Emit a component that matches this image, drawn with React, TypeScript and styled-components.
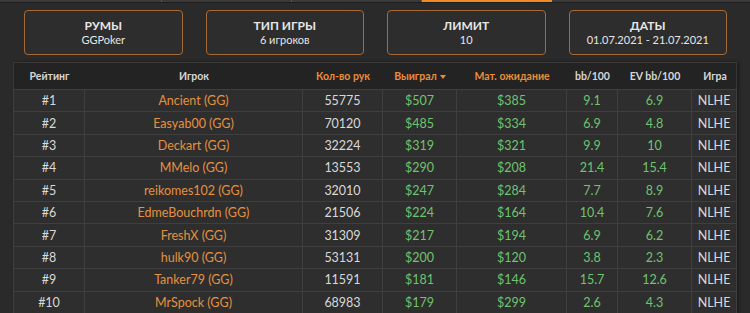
import React from 'react';
import styled, { createGlobalStyle } from 'styled-components';

const GlobalStyle = createGlobalStyle`
  html, body {
    margin: 0;
    padding: 0;
    background: #2a2a2a;
    font-family: Lato, "Open Sans", sans-serif;
    overflow: hidden;
  }
`;

const Page = styled.div`
  width: 750px;
  height: 313px;
  background: #2a2a2a;
  display: flex;
  flex-direction: column;
`;

const TabBar = styled.div`
  display: flex;
  height: 2px;
  padding-left: 32px;
  background: #3a3a3a;
  border-bottom: 1px solid #1f1f1f;
`;

const Tab = styled.div<{ $active?: boolean }>`
  width: 130px;
  height: 2px;
  background: ${(p) => (p.$active ? '#f08a24' : 'transparent')};
  border-right: ${(p) => (p.$active ? 'none' : '1px solid #555')};
  box-sizing: border-box;
`;

const Filters = styled.div`
  display: flex;
  gap: 23px;
  padding: 7px 23px 0 24px;
`;

const FilterCard = styled.div`
  flex: 1;
  height: 45px;
  box-sizing: border-box;
  border: 1px solid #a76a35;
  border-radius: 4px;
  background: #2d2d2d;
  display: flex;
  flex-direction: column;
  align-items: center;
  justify-content: center;
  color: #e6e6e6;
`;

const FilterTitle = styled.div`
  font-weight: 700;
  font-size: 12px;
  line-height: 14px;
`;

const FilterValue = styled.div`
  font-size: 11px;
  line-height: 14px;
`;

const Table = styled.div`
  margin: 7px 13px 0 13px;
  background: #2e2e2e;
  box-shadow: 2px 0 3px rgba(0, 0, 0, 0.35);
`;

const cols = '71px 218px 80px 74px 110px 51px 74px 46px';

const HeadRow = styled.div`
  display: grid;
  grid-template-columns: ${cols};
  height: 27px;
  background: #232323;
  border: 1px solid #383838;
  border-bottom: none;
  box-sizing: border-box;
`;

const HeadCell = styled.div<{ $accent?: boolean }>`
  display: flex;
  align-items: center;
  justify-content: center;
  gap: 3px;
  font-size: 10.5px;
  font-weight: 700;
  color: ${(p) => (p.$accent ? '#e88e3a' : '#d6d6d6')};
`;

const Caret = styled.span`
  width: 0;
  height: 0;
  border-left: 3.5px solid transparent;
  border-right: 3.5px solid transparent;
  border-top: 4px solid #e88e3a;
  margin-top: 1px;
`;

const Row = styled.div`
  display: grid;
  grid-template-columns: ${cols};
  height: 22.4px;
  box-sizing: border-box;
  border-top: 1px solid #3f3f3f;
`;

const Cell = styled.div<{ $tone?: 'name' | 'money' | 'plain' }>`
  display: flex;
  align-items: center;
  justify-content: center;
  font-size: 12.5px;
  border-left: 1px solid #3f3f3f;
  color: ${(p) =>
    p.$tone === 'name' ? '#e5913f' : p.$tone === 'money' ? '#6fc46f' : '#d9d9d9'};
  &:last-child {
    border-right: 1px solid #3f3f3f;
  }
`;

const rows = [
  ['#1', 'Ancient (GG)', '55775', '$507', '$385', '9.1', '6.9'],
  ['#2', 'Easyab00 (GG)', '70120', '$485', '$334', '6.9', '4.8'],
  ['#3', 'Deckart (GG)', '32224', '$319', '$321', '9.9', '10'],
  ['#4', 'MMelo (GG)', '13553', '$290', '$208', '21.4', '15.4'],
  ['#5', 'reikomes102 (GG)', '32010', '$247', '$284', '7.7', '8.9'],
  ['#6', 'EdmeBouchrdn (GG)', '21506', '$224', '$164', '10.4', '7.6'],
  ['#7', 'FreshX (GG)', '31309', '$217', '$194', '6.9', '6.2'],
  ['#8', 'hulk90 (GG)', '53131', '$200', '$120', '3.8', '2.3'],
  ['#9', 'Tanker79 (GG)', '11591', '$181', '$146', '15.7', '12.6'],
  ['#10', 'MrSpock (GG)', '68983', '$179', '$299', '2.6', '4.3'],
];

const filters = [
  ['РУМЫ', 'GGPoker'],
  ['ТИП ИГРЫ', '6 игроков'],
  ['ЛИМИТ', '10'],
  ['ДАТЫ', '01.07.2021 - 21.07.2021'],
];

const App = () => (
  <Page>
    <GlobalStyle />
    <TabBar>
      <Tab />
      <Tab />
      <Tab />
      <Tab $active />
    </TabBar>
    <Filters>
      {filters.map(([t, v]) => (
        <FilterCard key={t}>
          <FilterTitle>{t}</FilterTitle>
          <FilterValue>{v}</FilterValue>
        </FilterCard>
      ))}
    </Filters>
    <Table>
      <HeadRow>
        <HeadCell>Рейтинг</HeadCell>
        <HeadCell>Игрок</HeadCell>
        <HeadCell $accent>Кол-во рук</HeadCell>
        <HeadCell $accent>
          Выиграл <Caret />
        </HeadCell>
        <HeadCell $accent>Мат. ожидание</HeadCell>
        <HeadCell>bb/100</HeadCell>
        <HeadCell>EV bb/100</HeadCell>
        <HeadCell>Игра</HeadCell>
      </HeadRow>
      {rows.map((r) => (
        <Row key={r[0]}>
          <Cell>{r[0]}</Cell>
          <Cell $tone="name">{r[1]}</Cell>
          <Cell>{r[2]}</Cell>
          <Cell $tone="money">{r[3]}</Cell>
          <Cell $tone="money">{r[4]}</Cell>
          <Cell $tone="money">{r[5]}</Cell>
          <Cell $tone="money">{r[6]}</Cell>
          <Cell>NLHE</Cell>
        </Row>
      ))}
    </Table>
  </Page>
);

export default App;
